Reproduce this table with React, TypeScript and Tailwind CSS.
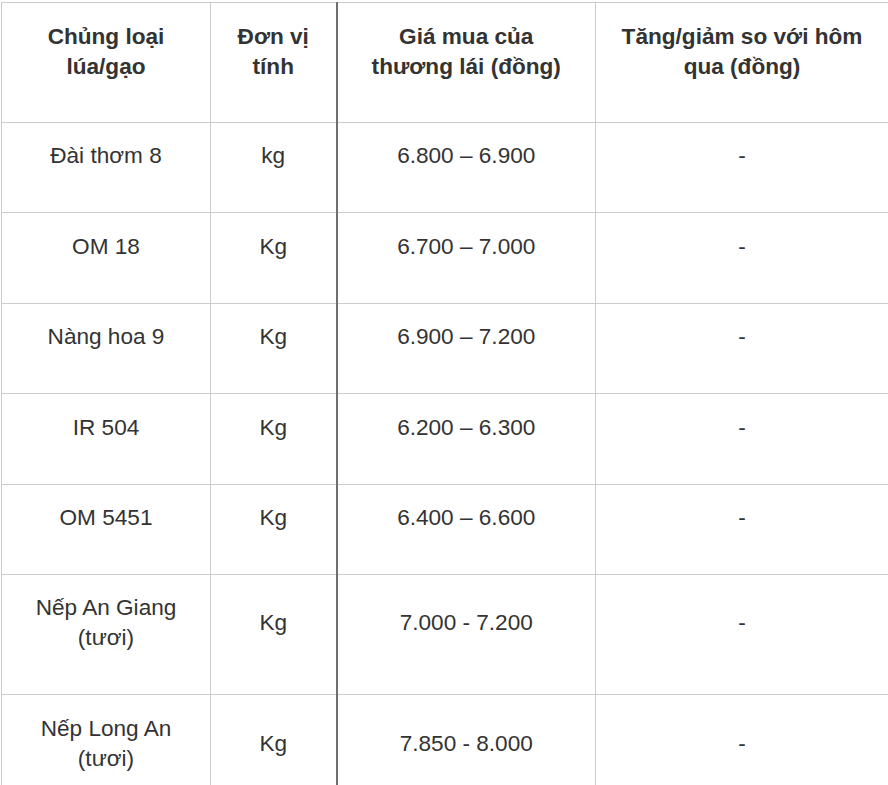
const header = ["Chủng loại lúa/gạo", "Đơn vị tính", "Giá mua của thương lái (đồng)", "Tăng/giảm so với hôm qua (đồng)"];

const rows: [string, string, string, string][] = [
  ["Đài thơm 8", "kg", "6.800 – 6.900", "-"],
  ["OM 18", "Kg", "6.700 – 7.000", "-"],
  ["Nàng hoa 9", "Kg", "6.900 – 7.200", "-"],
  ["IR 504", "Kg", "6.200 – 6.300", "-"],
  ["OM 5451", "Kg", "6.400 – 6.600", "-"],
  ["Nếp An Giang (tươi)", "Kg", "7.000 - 7.200", "-"],
  ["Nếp Long An (tươi)", "Kg", "7.850 - 8.000", "-"],
];

const widths = ["w-[209px]", "w-[126px]", "w-[259px]", "w-[293px]"];

function cellBorder(i: number) {
  // cot thu 3 co vien trai dam hon
  return i === 2 ? "border-l-2 border-l-[#6f6f6f]" : "";
}

export default function App() {
  return (
    <div className="bg-white min-h-screen pt-[2px] pl-[1px]" style={{ fontFamily: '"Liberation Sans", Arial, sans-serif' }}>
      <table className="w-[887px] table-fixed border-collapse text-[22.6px] leading-[30px] text-[#333]">
        <colgroup>
          {widths.map((w, i) => (
            <col key={i} className={w} />
          ))}
        </colgroup>
        <thead>
          <tr>
            {header.map((h, i) => (
              <th
                key={i}
                className={`border border-[#cccccc] ${cellBorder(i)} px-[24px] pt-[19px] pb-[40px] align-middle text-center font-bold`}
              >
                {h}
              </th>
            ))}
          </tr>
        </thead>
        <tbody>
          {rows.map((r, ri) => (
            <tr key={ri}>
              {r.map((c, i) => (
                <td
                  key={i}
                  className={`border border-[#cccccc] ${cellBorder(i)} px-[24px] pt-[18.4px] pb-[41px] align-middle text-center font-normal`}
                >
                  {c}
                </td>
              ))}
            </tr>
          ))}
        </tbody>
      </table>
    </div>
  );
}
